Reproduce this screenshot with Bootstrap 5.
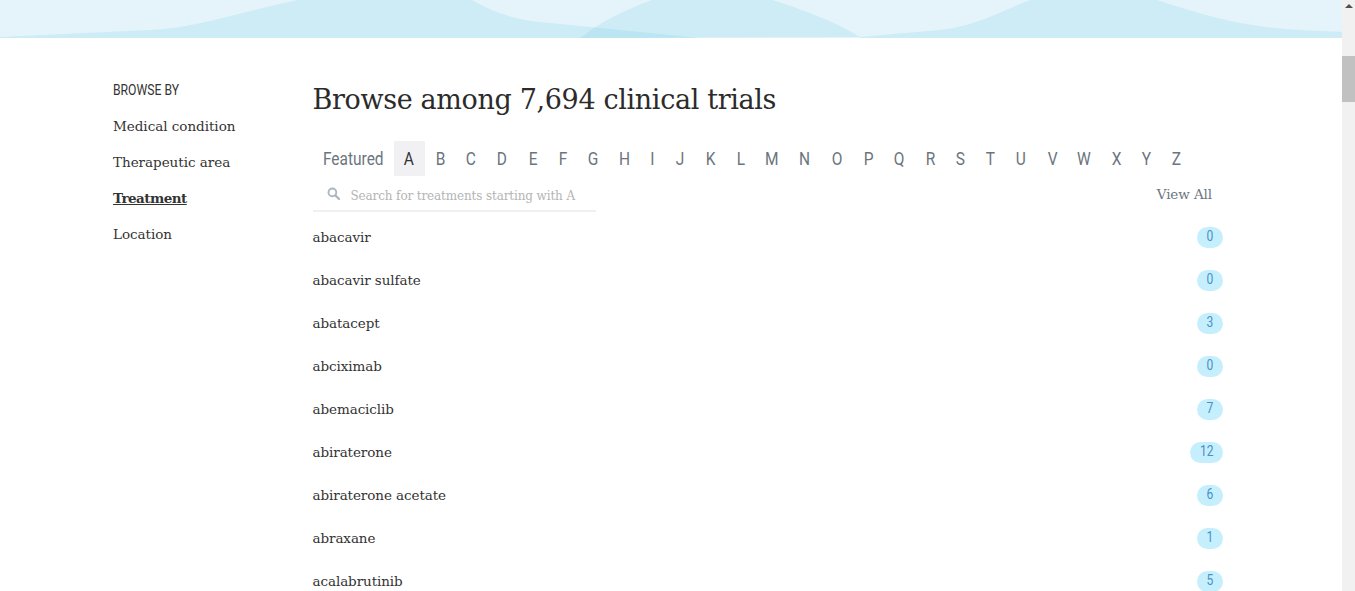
<!DOCTYPE html>
<html lang="en">
<head>
  <meta charset="UTF-8">
  <meta name="viewport" content="width=device-width, initial-scale=1.0">
  <title>Browse clinical trials</title>
  <link href="https://cdn.jsdelivr.net/npm/bootstrap@5.3.0/dist/css/bootstrap.min.css" rel="stylesheet">
  <style>
    html, body {
      height: 100%;
      overflow: hidden;
    }
    body {
      font-family: "DejaVu Serif", "Liberation Serif", serif;
      color: #333;
      background-color: #fff;
    }
    .page-shell { height: 591px; overflow: hidden; }
    .page-wave { display: block; width: 100%; height: 38px; }
    .page-body { padding-left: 113px; padding-right: 119px; }

    /* Roboto squeezed, the reference uses a condensed face */
    .narrow-text { display: inline-block; transform: scaleX(.86); }

    .side-col { width: 199.5px; padding-top: 44px; }
    .side-title {
      font-family: Roboto, sans-serif;
      font-size: 14px;
      line-height: 16px;
      color: #333;
      margin-bottom: 10px;
    }
    .side-title .narrow-text { transform-origin: left center; transform: scaleX(.87); }
    .side-link {
      display: block;
      font-size: 13.5px;
      line-height: 36px;
      letter-spacing: -.03px;
      color: #333;
      text-decoration: none;
    }
    .side-link.current { font-weight: 700; text-decoration: underline; letter-spacing: -.55px; }

    .main-heading {
      font-family: "DejaVu Serif", serif;
      font-size: 27px;
      line-height: 40px;
      font-weight: 400;
      letter-spacing: -.35px;
      color: #2b2b2b;
      margin: 42px 0 21px;
    }
    .letter-bar { height: 35px; }
    .letter-bar a {
      font-family: Roboto, sans-serif;
      font-size: 18px;
      line-height: 35px;
      text-align: center;
      color: #6c757d;
      text-decoration: none;
    }
    .letter-bar a span { margin-left: .5px; }
    .letter-bar a.featured { width: 81px; }
    .letter-bar a.featured span { margin-left: 0; }
    .letter-bar a.current { background-color: #f1f1f3; color: #333; }

    .search-row { height: 36px; }
    .search-box {
      width: 283px;
      height: 36px;
      border-bottom: 2px solid #f0f0f0;
      padding-left: 14px;
      padding-top: 6px;
    }
    .search-box svg { width: 13px; height: 13px; margin-right: 11px; margin-top: -5px; flex: none; }
    .search-box input {
      border: 0;
      outline: 0;
      padding: 0;
      width: 245px;
      font-family: inherit;
      font-size: 12px;
      letter-spacing: -.13px;
      background: transparent;
    }
    .search-box input::placeholder { color: #b4b4b4; opacity: 1; }
    .view-all {
      font-size: 13.5px;
      letter-spacing: -.1px;
      color: #6c757d;
      text-decoration: none;
      margin-right: 11px;
    }

    .trial-list { padding-top: 4px; }
    .trial-row {
      height: 43px;
      font-size: 13.5px;
      letter-spacing: -.08px;
      color: #333;
      text-decoration: none;
    }
    .trial-count {
      min-width: 26px;
      height: 21px;
      padding: 0 8.5px;
      border-radius: 11px;
      background-color: #c5effd;
      color: #4b8fc7;
      font-family: Roboto, sans-serif;
      font-size: 14px;
      line-height: 19px;
      text-align: center;
    }

    .fake-scrollbar { width: 13px; height: 591px; background-color: #f1f1f1; flex: none; }
    .scroll-arrow {
      width: 0;
      height: 0;
      margin: 4px auto 0;
      border-left: 4px solid transparent;
      border-right: 4px solid transparent;
      border-bottom: 4px solid #505050;
    }
    .scroll-thumb { height: 46px; margin-top: 48px; background-color: #c1c1c1; }
  </style>
</head>
<body>
  <div class="d-flex page-shell">
    <div class="flex-grow-1 overflow-hidden">
      <svg class="page-wave" viewBox="0 0 1342 38" preserveAspectRatio="none" aria-hidden="true">
        <rect width="1342" height="38" fill="#e4f4fa"/>
        <path d="M0 37 L150 30 C195 28 240 12 298 0 L472 0 C495 14 520 21 550 23 L700 38 L0 38 Z" fill="#71cce6" opacity=".2"/>
        <path d="M580 38 C600 22 625 10 652 0 L772 0 C805 10 835 22 860 37 L580 38 Z" fill="#71cce6" opacity=".2"/>
        <path d="M860 37 L940 30 C975 26 1000 12 1030 0 L1157 0 C1200 14 1240 27 1300 30 L1342 32 L1342 38 L860 38 Z" fill="#71cce6" opacity=".2"/>
      </svg>

      <div class="d-flex page-body">
        <aside class="side-col flex-shrink-0">
          <div class="side-title"><span class="narrow-text">BROWSE BY</span></div>
          <nav>
            <a class="side-link" href="#">Medical condition</a>
            <a class="side-link" href="#">Therapeutic area</a>
            <a class="side-link current" href="#">Treatment</a>
            <a class="side-link" href="#">Location</a>
          </nav>
        </aside>

        <main class="flex-grow-1">
          <h1 class="main-heading">Browse among 7,694 clinical trials</h1>

          <div class="d-flex letter-bar" id="letterBar">
            <a class="featured" href="#"><span class="narrow-text">Featured</span></a>
          </div>

          <div class="d-flex justify-content-between align-items-center search-row">
            <div class="d-flex align-items-center search-box">
              <svg viewBox="0 0 14 14" aria-hidden="true">
                <circle cx="5.8" cy="5.8" r="4.2" fill="none" stroke="#adb5bd" stroke-width="2"/>
                <path d="M9 9 L13 13" stroke="#adb5bd" stroke-width="2.4" stroke-linecap="round"/>
              </svg>
              <input type="text" placeholder="Search for treatments starting with A">
            </div>
            <a class="view-all" href="#">View All</a>
          </div>

          <div class="trial-list" id="trialList"></div>
        </main>
      </div>
    </div>

    <div class="fake-scrollbar">
      <div class="scroll-arrow"></div>
      <div class="scroll-thumb"></div>
    </div>
  </div>

  <script>
    // letter widths follow the reference, the glyphs are not all the same width
    const letters = [
      ['A', 31], ['B', 31], ['C', 31], ['D', 31], ['E', 30], ['F', 30], ['G', 31], ['H', 31], ['I', 25],
      ['J', 31], ['K', 30], ['L', 30], ['M', 33], ['N', 32], ['O', 32], ['P', 31], ['Q', 31], ['R', 31],
      ['S', 30], ['T', 30], ['U', 31], ['V', 31], ['W', 33], ['X', 31], ['Y', 30], ['Z', 30]
    ];
    const letterBar = document.getElementById('letterBar');
    letters.forEach(([letter, width], index) => {
      const a = document.createElement('a');
      a.href = '#';
      a.innerHTML = `<span class="narrow-text">${letter}</span>`;
      a.style.width = width + 'px';
      if (index === 0) a.classList.add('current');
      letterBar.appendChild(a);
    });

    const trials = [
      ['abacavir', 0], ['abacavir sulfate', 0], ['abatacept', 3], ['abciximab', 0], ['abemaciclib', 7],
      ['abiraterone', 12], ['abiraterone acetate', 6], ['abraxane', 1], ['acalabrutinib', 5]
    ];
    const trialList = document.getElementById('trialList');
    trials.forEach(([name, count]) => {
      const a = document.createElement('a');
      a.href = '#';
      a.className = 'd-flex justify-content-between align-items-center trial-row';
      a.innerHTML = `<span>${name}</span><span class="trial-count"><span class="narrow-text">${count}</span></span>`;
      trialList.appendChild(a);
    });
  </script>
  <script src="https://cdn.jsdelivr.net/npm/bootstrap@5.3.0/dist/js/bootstrap.bundle.min.js"></script>
</body>
</html>
